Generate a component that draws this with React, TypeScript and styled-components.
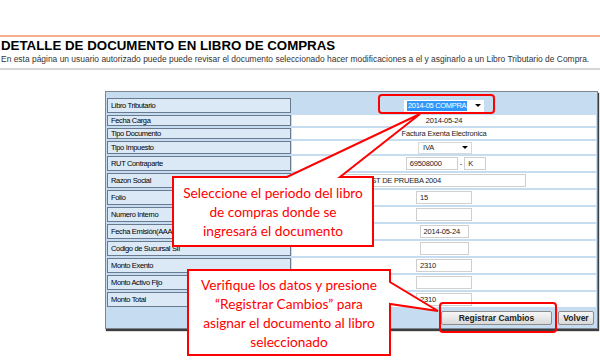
import styled, { createGlobalStyle } from 'styled-components';

const GlobalStyle = createGlobalStyle`
  html, body {
    margin: 0;
    padding: 0;
    background: #fff;
  }
  body {
    font-family: "Liberation Sans", Arial, sans-serif;
  }
  * {
    box-sizing: border-box;
  }
`;

type FieldKind = 'period' | 'text' | 'select' | 'rut' | 'input' | 'wide';

type Field = {
  label: string;
  kind: FieldKind;
  value?: string;
  height: number;
  width?: number;
};

const fields: Field[] = [
  { label: 'Libro Tributario', kind: 'period', value: '2014-05 COMPRA', height: 15 },
  { label: 'Fecha Carga', kind: 'text', value: '2014-05-24', height: 11 },
  { label: 'Tipo Documento', kind: 'text', value: 'Factura Exenta Electronica', height: 11 },
  { label: 'Tipo Impuesto', kind: 'select', value: 'IVA', height: 13 },
  { label: 'RUT Contraparte', kind: 'rut', value: '69508000', height: 15 },
  { label: 'Razon Social', kind: 'wide', value: 'CLIENTE TEST DE PRUEBA 2004', height: 15 },
  { label: 'Folio', kind: 'input', value: '15', height: 15, width: 56 },
  { label: 'Numero Interno', kind: 'input', value: '', height: 15, width: 56 },
  { label: 'Fecha Emisión(AAAA-MM-DD)', kind: 'input', value: '2014-05-24', height: 15, width: 49 },
  { label: 'Codigo de  Sucursal SII', kind: 'input', value: '', height: 15, width: 49 },
  { label: 'Monto Exento', kind: 'input', value: '2310', height: 15, width: 56 },
  { label: 'Monto Activo Fijo', kind: 'input', value: '', height: 15, width: 56 },
  { label: 'Monto Total', kind: 'input', value: '2310', height: 15, width: 56 },
];

const renderValue = (f: Field) => {
  switch (f.kind) {
    case 'period':
      return (
        <PeriodSelect>
          <Selected>{f.value}</Selected>
          <Arrow />
        </PeriodSelect>
      );
    case 'select':
      return (
        <SmallSelect>
          <span>{f.value}</span>
          <Arrow />
        </SmallSelect>
      );
    case 'rut':
      return (
        <RutGroup>
          <TextBox $width={52}>{f.value}</TextBox>
          <span>-</span>
          <TextBox $width={22}>K</TextBox>
        </RutGroup>
      );
    case 'wide':
      return (
        <WideSlot>
          <TextBox $width={200}>{f.value}</TextBox>
        </WideSlot>
      );
    case 'input':
      return <TextBox $width={f.width ?? 56}>{f.value}</TextBox>;
    default:
      return <span>{f.value}</span>;
  }
};

const Callout = ({
  x,
  y,
  w,
  h,
  path,
  lines,
}: {
  x: number;
  y: number;
  w: number;
  h: number;
  path: string;
  lines: string[];
}) => (
  <CalloutBox style={{ left: x, top: y, width: w, height: h }}>
    <CalloutShape width={w} height={h}>
      <path d={path} fill="#fff" stroke="#ff0000" strokeWidth="2" strokeLinejoin="miter" />
    </CalloutShape>
    <CalloutText>
      {lines.map((l) => (
        <div key={l}>{l}</div>
      ))}
    </CalloutText>
  </CalloutBox>
);

export default function App() {
  return (
    <Screen>
      <GlobalStyle />
      <HeaderBar>
        <Title>DETALLE DE DOCUMENTO EN LIBRO DE COMPRAS</Title>
        <Intro>
          En esta página un usuario autorizado puede puede revisar el documento seleccionado hacer
          modificaciones a el y asginarlo a un Libro Tributario de Compra.
        </Intro>
      </HeaderBar>

      <Panel>
        <FieldGrid>
          {fields.map((f, i) => (
            <Row key={f.label}>
              <LabelCell $height={f.height}>{f.label}</LabelCell>
              <ValueCell $header={i === 0}>{renderValue(f)}</ValueCell>
            </Row>
          ))}
        </FieldGrid>
        <ButtonBar>
          <Button $width={111}>Registrar Cambios</Button>
          <Button $width={36}>Volver</Button>
        </ButtonBar>
      </Panel>

      <Highlight $x={378} $y={94} $w={117} $h={20} />
      <Highlight $x={439} $y={302} $w={118} $h={31} />

      <Callout
        x={173}
        y={177}
        w={200}
        h={69}
        path="M0,0 L114,0 L247,-63 L167,0 L200,0 L200,69 L0,69 Z"
        lines={['Seleccione el periodo del libro', 'de compras donde se', 'ingresará el documento']}
      />
      <Callout
        x={188}
        y={270}
        w={202}
        h={85}
        path="M0,0 L202,0 L202,12 L250,41 L202,34 L202,85 L0,85 Z"
        lines={[
          'Verifique los datos y presione',
          '“Registrar Cambios” para',
          'asignar el documento al libro',
          'seleccionado',
        ]}
      />
    </Screen>
  );
}

const Screen = styled.div`
  position: relative;
  width: 600px;
  height: 361px;
  overflow: hidden;
  background: #fff;
`;

const HeaderBar = styled.div`
  margin-top: 35px;
  border-top: 2px solid #f8b08c;
  border-bottom: 2px solid #d6d6d6;
  padding: 1px 0 4px 1px;
`;

const Title = styled.h1`
  margin: 0;
  font-size: 13.3px;
  line-height: 16px;
  font-weight: bold;
  color: #000;
`;

const Intro = styled.p`
  margin: 0;
  font-size: 8.45px;
  line-height: 10px;
  color: #333;
  white-space: nowrap;
`;

const Panel = styled.div`
  width: 493px;
  margin: 21px 0 0 105px;
  padding: 6px 1px 3px 1px;
  background: #c6dcf1;
  border: 1px solid #7d8793;
  box-shadow: 1px 2px 1px #3c3c3c;
`;

const FieldGrid = styled.div`
  display: flex;
  flex-direction: column;
  gap: 2px;
`;

const Row = styled.div`
  display: grid;
  grid-template-columns: 184px 1fr;
  column-gap: 1px;
`;

const LabelCell = styled.div<{ $height: number }>`
  height: ${(p) => p.$height}px;
  display: flex;
  align-items: center;
  padding-left: 3px;
  background: #dbe8f5;
  border: 1px solid #6a7a8e;
  font-size: 7.5px;
  letter-spacing: -0.35px;
  color: #000;
  white-space: nowrap;
  overflow: hidden;
`;

const ValueCell = styled.div<{ $header: boolean }>`
  display: flex;
  align-items: center;
  justify-content: center;
  background: ${(p) => (p.$header ? 'transparent' : '#fff')};
  font-size: 7.5px;
  letter-spacing: -0.2px;
  color: #222;
`;

const TextBox = styled.div<{ $width: number }>`
  width: ${(p) => p.$width}px;
  height: 13px;
  padding-left: 3px;
  display: flex;
  align-items: center;
  border: 1px solid #cfcfcf;
  background: #fff;
  font-size: 7.5px;
  letter-spacing: -0.2px;
  color: #222;
  white-space: nowrap;
  overflow: hidden;
`;

const RutGroup = styled.div`
  display: flex;
  align-items: center;
  gap: 2px;
  margin-left: 4px;
`;

const WideSlot = styled.div`
  display: flex;
  justify-content: flex-start;
  width: 100%;
  padding-left: 34px;
`;

const PeriodSelect = styled.div`
  display: flex;
  align-items: center;
  justify-content: space-between;
  width: 80px;
  height: 12px;
  padding: 0 3px 0 3px;
  background: #fff;
`;

const Selected = styled.span`
  background: #3297fd;
  color: #fff;
  font-size: 7.5px;
  letter-spacing: -0.3px;
  line-height: 10px;
  padding: 0 1px;
`;

const SmallSelect = styled.div`
  display: flex;
  align-items: center;
  justify-content: space-between;
  width: 54px;
  height: 12px;
  margin-left: 2px;
  padding: 0 3px 0 4px;
  border: 1px solid #d8d8d8;
  background: #fff;
`;

const Arrow = styled.span`
  width: 0;
  height: 0;
  border-left: 3px solid transparent;
  border-right: 3px solid transparent;
  border-top: 3px solid #000;
`;

const ButtonBar = styled.div`
  display: flex;
  justify-content: flex-end;
  gap: 6px;
  padding: 4px 2px 0 0;
`;

const Button = styled.div<{ $width: number }>`
  width: ${(p) => p.$width}px;
  height: 14px;
  display: flex;
  align-items: center;
  justify-content: center;
  border: 1px solid #8c8c8c;
  border-radius: 2px;
  background: linear-gradient(#f7f7f7, #d9d9d9);
  font-size: 8.5px;
  font-weight: bold;
  color: #222;
`;

const Highlight = styled.div<{ $x: number; $y: number; $w: number; $h: number }>`
  position: absolute;
  left: ${(p) => p.$x}px;
  top: ${(p) => p.$y}px;
  width: ${(p) => p.$w}px;
  height: ${(p) => p.$h}px;
  border: 2px solid #ff0000;
  border-radius: 4px;
`;

const CalloutBox = styled.div`
  position: absolute;
`;

const CalloutShape = styled.svg`
  position: absolute;
  left: 0;
  top: 0;
  overflow: visible;
`;

const CalloutText = styled.div`
  position: relative;
  height: 100%;
  display: flex;
  flex-direction: column;
  align-items: center;
  justify-content: center;
  font-family: Lato, "Open Sans", sans-serif;
  font-size: 13.7px;
  line-height: 19px;
  color: #ff0000;
  white-space: nowrap;
`;
